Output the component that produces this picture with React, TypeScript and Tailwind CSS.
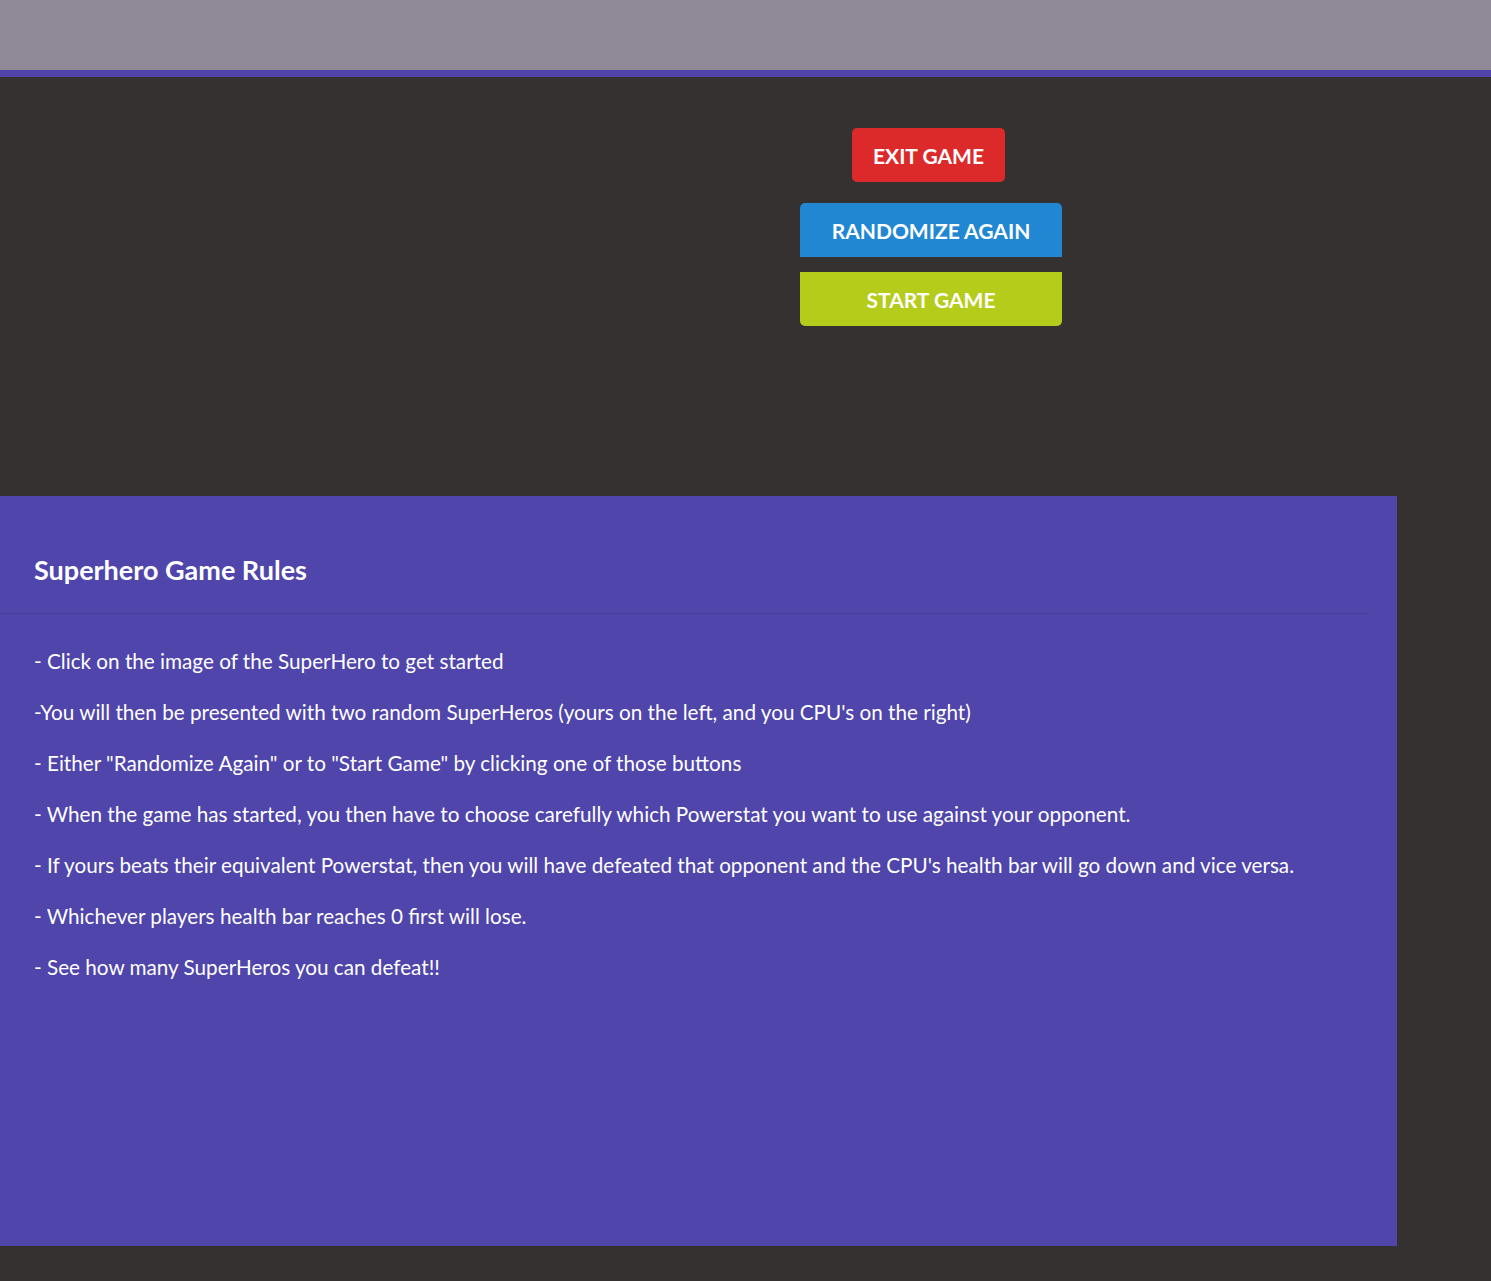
const rules = [
  '- Click on the image of the SuperHero to get started',
  "-You will then be presented with two random SuperHeros (yours on the left, and you CPU's on the right)",
  '- Either "Randomize Again" or to "Start Game" by clicking one of those buttons',
  '- When the game has started, you then have to choose carefully which Powerstat you want to use against your opponent.',
  "- If yours beats their equivalent Powerstat, then you will have defeated that opponent and the CPU's health bar will go down and vice versa.",
  '- Whichever players health bar reaches 0 first will lose.',
  '- See how many SuperHeros you can defeat!!',
]

export default function App() {
  return (
    <div className="min-h-screen bg-[#353131] font-['Lato','Liberation_Sans',sans-serif] text-white">
      <header className="h-[77px] bg-[#908a98] border-b-[7px] border-[#5044ab]" />

      <section className="h-[419px] pt-[51px]">
        <div className="ml-[800px] w-[262px] flex flex-col items-center">
          <button className="mr-[5px] w-[153px] h-[54px] pt-[2px] rounded-[5px] bg-[#dc2a2a] text-[21px] font-bold uppercase">
            Exit Game
          </button>
          <button className="mt-[21px] w-full h-[54px] pt-[2px] rounded-t-[5px] bg-[#2287d3] text-[21px] font-bold uppercase">
            Randomize Again
          </button>
          <button className="mt-[15px] w-full h-[54px] pt-[2px] rounded-b-[5px] bg-[#b5cc1a] text-[21px] font-bold uppercase">
            Start Game
          </button>
        </div>
      </section>

      <section className="w-[1397px] h-[750px] bg-[#4f45ab]">
        <div className="w-[1367px] border-b border-[#473d9f] h-[118px] flex items-center pl-[34px] pt-[32px]">
          <h2 className="text-[27px] font-bold">Superhero Game Rules</h2>
        </div>
        <div className="pl-[34px] pt-[22px] flex flex-col">
          {rules.map((rule) => (
            <p key={rule} className="text-[20.7px] leading-[51px]">
              {rule}
            </p>
          ))}
        </div>
      </section>
    </div>
  )
}
